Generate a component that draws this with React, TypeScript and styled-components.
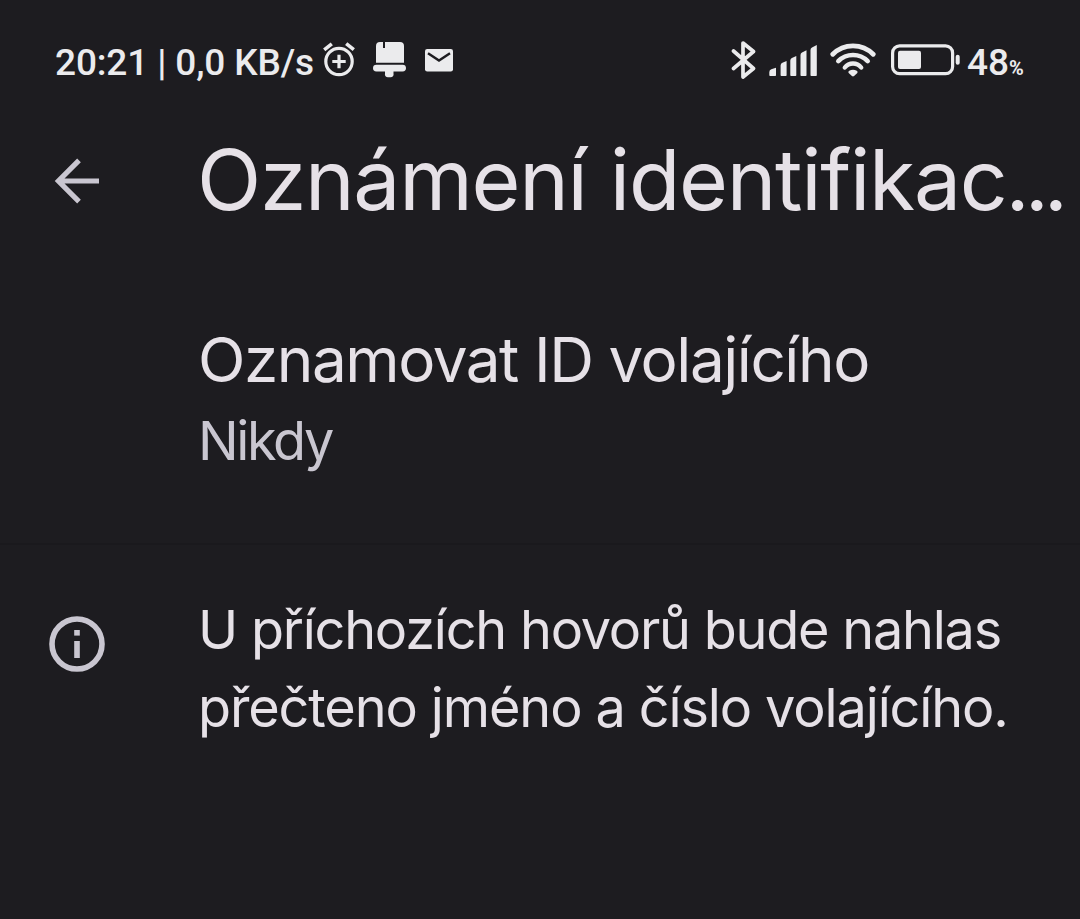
import React from 'react'
import styled, { createGlobalStyle } from 'styled-components'

const GlobalStyle = createGlobalStyle`
  body {
    margin: 0;
    background: #1d1c20;
  }
`

const AlarmIcon = () => (
  <svg width="34" height="38" viewBox="0 0 34 38" fill="none" stroke="#ebebed">
    <circle cx="16" cy="21.5" r="13.2" strokeWidth="3.2" />
    <path d="M16 14.8v13.4M9.3 21.5h13.4" strokeWidth="3.2" />
    <path d="M1.2 9.8l7.6-6M23.2 3.6l7.6 6" strokeWidth="3.6" />
  </svg>
)

const BellIcon = () => (
  <svg width="34" height="38" viewBox="0 0 34 38" fill="#ebebed">
    <path d="M3 22.7V6a4 4 0 0 1 4-4h3v6h2V2h15a4 4 0 0 1 4 4v16.7z" />
    <rect x="0" y="24.7" width="33" height="6.8" rx="3.4" />
    <path d="M12 30.5h8.5v3a3 3 0 0 1-3 3.8h-2.5a3 3 0 0 1-3-3.8z" />
  </svg>
)

const MailIcon = () => (
  <svg width="28" height="23" viewBox="0 0 28 23">
    <rect width="28" height="22.5" rx="2.2" fill="#ebebed" />
    <path d="M3 4.3l11 7.3 11-7.3" fill="none" stroke="#1d1c20" strokeWidth="2.4" />
  </svg>
)

const BluetoothIcon = () => (
  <svg width="26" height="40" viewBox="0 0 26 40" fill="none" stroke="#ebebed">
    <path
      d="M2.5 11L22.5 28.5 12 37V3l10.500 8.500L2.500 28.500"
      strokeWidth="3.7"
      strokeLinejoin="round"
      strokeLinecap="round"
    />
  </svg>
)

const SignalIcon = () => (
  <svg width="49" height="32" viewBox="0 0 49 32" fill="#ebebed">
    <path d="M.3 30.2V27a3 3 0 0 1 2-2.7L7 22.7v7.5q0 .8-.8.8H1.1q-.8 0-.8-.8z" />
    <path d="M11.600 30.200V20.500a3 3 0 0 1 1.800-2.700l4.200-1.800v14.200q0 .8-.8.800h-4.400q-.8 0-.8-.8z" />
    <path d="M21.300 30.200V15.500a3 3 0 0 1 1.600-2.600l4.400-2v19.300q0 .8-.8.800h-4.400q-.8 0-.8-.8z" />
    <path d="M31.500 30.200V10a3 3 0 0 1 1.500-2.600l4.500-2.200v25q0 .8-.8.800h-4.400q-.8 0-.8-.8z" />
    <path d="M41.500 30.200V5a3 3 0 0 1 1.500-2.600L47.800.1v30.100q0 .8-.8.800h-4.700q-.8 0-.8-.8z" />
  </svg>
)

const WifiIcon = () => (
  <svg width="46" height="34" viewBox="0 0 46 34" fill="none" stroke="#ebebed" strokeLinecap="round">
    <path d="M2.8 11.3a28.5 28.5 0 0 1 40.400 0" strokeWidth="4.8" />
    <path d="M8.3 18.100a20.600 20.600 0 0 1 29.400 0" strokeWidth="4.600" />
    <path d="M14.8 24.500a10.500 10.500 0 0 1 16.400 0" strokeWidth="4.400" />
    <path d="M23 31.800l-3-2.700q3-1.600 6 0z" fill="#ebebed" strokeWidth="3.200" strokeLinejoin="round" />
  </svg>
)

const BatteryIcon = () => (
  <svg width="70" height="32" viewBox="0 0 70 32" fill="#ebebed">
    <rect x="1.6" y="1.9" width="60" height="27.8" rx="7" fill="none" stroke="#ebebed" strokeWidth="3.2" />
    <rect x="7" y="6.8" width="23" height="18.2" rx="2" />
    <rect x="64.7" y="10.8" width="4" height="10" rx="2" />
  </svg>
)

const BackIcon = () => (
  <svg width="46" height="46" viewBox="0 0 46 46" fill="none" stroke="#c9c6d0" strokeWidth="5.2">
    <path d="M45 23H4.5M25 2.400L4.400 23 25 43.600" />
  </svg>
)

const InfoIcon = () => (
  <svg width="56" height="56" viewBox="0 0 56 56" fill="#c9c6d0">
    <circle cx="28" cy="28" r="25" fill="none" stroke="#c9c6d0" strokeWidth="5.6" />
    <rect x="25.2" y="14" width="5.6" height="5.6" />
    <rect x="25.2" y="25" width="5.6" height="17" />
  </svg>
)

const App: React.FC = () => {
  return (
    <Screen>
      <GlobalStyle />
      <StatusBar>
        <Clock>20:21 | 0,0 KB/s</Clock>
        <Slot $left={10} $top={40}>
          <AlarmIcon />
        </Slot>
        <Slot $left={16} $top={40}>
          <BellIcon />
        </Slot>
        <Slot $left={18} $top={49}>
          <MailIcon />
        </Slot>
        <Spacer />
        <Slot $left={0} $top={40}>
          <BluetoothIcon />
        </Slot>
        <Slot $left={12} $top={45}>
          <SignalIcon />
        </Slot>
        <Slot $left={12} $top={43}>
          <WifiIcon />
        </Slot>
        <Slot $left={15} $top={44}>
          <BatteryIcon />
        </Slot>
        <Battery>
          48<small>%</small>
        </Battery>
      </StatusBar>
      <Header>
        <BackButton aria-label="Zpět">
          <BackIcon />
        </BackButton>
        <Title>
          Oznámení identifikac<Dots>...</Dots>
        </Title>
      </Header>
      <Setting>
        <SettingName>Oznamovat ID volajícího</SettingName>
        <SettingValue>Nikdy</SettingValue>
      </Setting>
      <Divider />
      <Footer>
        <InfoSlot>
          <InfoIcon />
        </InfoSlot>
        <FooterText>
          <Line $spacing={-1.23}>U příchozích hovorů bude nahlas</Line>
          <Line $spacing={-1.12}>přečteno jméno a číslo volajícího.</Line>
        </FooterText>
      </Footer>
    </Screen>
  )
}

export default App

const Screen = styled.div`
  width: 1080px;
  height: 919px;
  display: flex;
  flex-direction: column;
  overflow: hidden;
  background: #1d1c20;
  color: #e6e1e7;
  font-family: Inter, 'Liberation Sans', sans-serif;
  white-space: nowrap;
`

const StatusBar = styled.div`
  height: 120px;
  box-sizing: border-box;
  padding: 0 56px 0 55px;
  display: flex;
  align-items: flex-start;
  flex-shrink: 0;
  color: #ebebed;
  font-family: Roboto, sans-serif;
  font-weight: 500;
`

const Clock = styled.div`
  width: 258px;
  padding-top: 41px;
  font-size: 37px;
  line-height: 44px;
  letter-spacing: -0.15px;
`

const Slot = styled.div<{ $left: number; $top: number }>`
  padding-left: ${({ $left }) => $left}px;
  padding-top: ${({ $top }) => $top}px;

  & svg {
    display: block;
  }
`

const Spacer = styled.div`
  flex: 1;
`

const Battery = styled.div`
  width: 57px;
  margin-left: 6px;
  padding-top: 41px;
  font-size: 37px;
  line-height: 44px;

  & small {
    font-size: 20px;
    font-weight: 700;
  }
`

const Header = styled.div`
  height: 122px;
  display: flex;
  align-items: center;
  flex-shrink: 0;
`

const BackButton = styled.button`
  width: 197px;
  padding: 0 0 0 54px;
  border: none;
  background: transparent;
  text-align: left;

  & svg {
    display: block;
  }
`

const Title = styled.h1`
  margin: 0;
  padding-bottom: 3px;
  font-size: 84px;
  line-height: 100px;
  font-weight: 400;
  letter-spacing: -1.3px;
  word-spacing: 1px;
`

const Dots = styled.span`
  margin-left: -1px;
  letter-spacing: -5px;
`

const Setting = styled.div`
  height: 301px;
  box-sizing: border-box;
  padding: 78px 0 0 198px;
  flex-shrink: 0;
`

const SettingName = styled.div`
  font-size: 62px;
  line-height: 80px;
  letter-spacing: -1.45px;
`

const SettingValue = styled.div`
  padding-top: 1px;
  font-size: 54px;
  line-height: 80px;
  letter-spacing: -2.4px;
  color: #c9c6d0;
`

const Divider = styled.div`
  height: 2px;
  flex-shrink: 0;
  background: #1a191d;
`

const Footer = styled.div`
  padding-top: 46px;
  display: flex;
`

const InfoSlot = styled.div`
  width: 149px;
  padding: 25px 0 0 49px;
`

const FooterText = styled.div`
  font-size: 54px;
  line-height: 78px;
`

const Line = styled.div<{ $spacing: number }>`
  letter-spacing: ${({ $spacing }) => $spacing}px;
`
